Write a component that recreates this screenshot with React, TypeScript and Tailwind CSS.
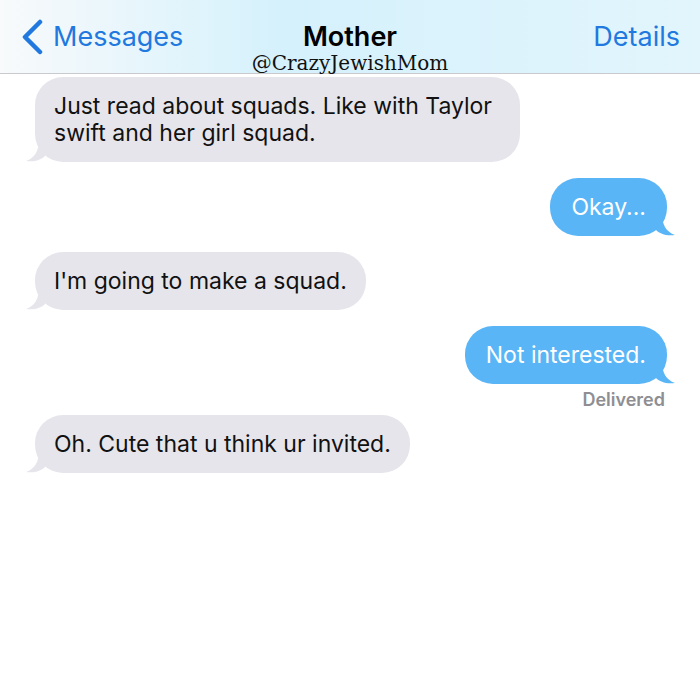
import React from 'react';

type Msg = { id: number; text: string; fromMe: boolean };

const MESSAGES: Msg[] = [
  { id: 1, text: 'Just read about squads. Like with Taylor swift and her girl squad.', fromMe: false },
  { id: 2, text: 'Okay...', fromMe: true },
  { id: 3, text: "I'm going to make a squad.", fromMe: false },
  { id: 4, text: 'Not interested.', fromMe: true },
  { id: 5, text: 'Oh. Cute that u think ur invited.', fromMe: false },
];

const Tail: React.FC<{ fromMe: boolean }> = ({ fromMe }) =>
  fromMe ? (
    <svg className="absolute -right-[9px] bottom-0" width="24" height="22" viewBox="0 0 24 22">
      <path d="M0 0 L10 0 C10 10 14 18 23 21 C14 22 8 20 4 16 Z" fill="#5ab5f6" />
    </svg>
  ) : (
    <svg className="absolute -left-[10px] bottom-0" width="24" height="22" viewBox="0 0 24 22">
      <path d="M24 0 L14 0 C14 10 10 18 1 21 C10 22 16 20 20 16 Z" fill="#e6e5eb" />
    </svg>
  );

const Bubble: React.FC<{ msg: Msg }> = ({ msg }) => (
  <div className={`flex ${msg.fromMe ? 'justify-end' : 'justify-start'}`}>
    <div
      className={`relative rounded-[28px] py-[15.5px] text-[23px] leading-[27px] ${
        msg.fromMe ? 'px-[21px] bg-[#5ab5f6] text-white' : 'px-[19px] bg-[#e6e5eb] text-[#111111] max-w-[485px]'
      }`}
    >
      <Tail fromMe={msg.fromMe} />
      <span className="relative">{msg.text}</span>
    </div>
  </div>
);

export default function App() {
  return (
    <div className="w-[700px] h-[700px] bg-white overflow-hidden" style={{ fontFamily: 'Inter, "Noto Sans", sans-serif' }}>
      <div className="relative h-[74px] border-b border-[#c9c9ce] bg-gradient-to-r from-[#f8fafb] via-[#d5f1fc] via-40% to-[#e2f5fc] flex items-start justify-between px-[20px] pt-[19px]">
        <div className="flex items-center gap-[9px] text-[#2179e0]">
          <svg width="24" height="36" viewBox="0 0 24 36">
            <path d="M20 3 L5 18 L20 33" fill="none" stroke="#2179e0" strokeWidth="4.5" strokeLinecap="round" strokeLinejoin="round" />
          </svg>
          <span className="text-[27px] leading-[36px]">Messages</span>
        </div>
        <div className="absolute left-0 right-0 top-[19px] flex flex-col items-center pointer-events-none">
          <span className="text-[27px] leading-[36px] font-semibold text-black">Mother</span>
          <span className="text-[20px] leading-[22px] -mt-[3px] text-[#111]" style={{ fontFamily: '"DejaVu Serif", serif' }}>
            @CrazyJewishMom
          </span>
        </div>
        <span className="text-[27px] leading-[36px] text-[#2179e0]">Details</span>
      </div>

      <div className="flex flex-col pl-[35px] pr-[33px] pt-[3px]">
        <Bubble msg={MESSAGES[0]} />
        <div className="mt-[16px]"><Bubble msg={MESSAGES[1]} /></div>
        <div className="mt-[16px]"><Bubble msg={MESSAGES[2]} /></div>
        <div className="mt-[16px]"><Bubble msg={MESSAGES[3]} /></div>
        <div className="text-right text-[18px] leading-[20px] font-semibold text-[#8e8e93] mt-[6px] pr-[2px]">Delivered</div>
        <div className="mt-[5px]"><Bubble msg={MESSAGES[4]} /></div>
      </div>
    </div>
  );
}
